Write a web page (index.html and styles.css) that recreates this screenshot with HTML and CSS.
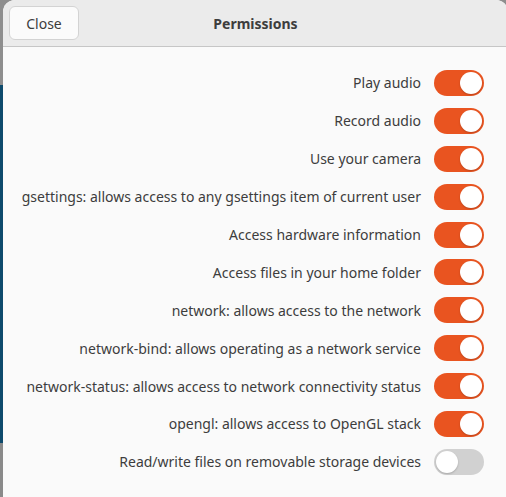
FILE: index.html
```html
<!DOCTYPE html>
<html>
<head>
<meta charset="utf-8">
<link rel="stylesheet" href="styles.css">
</head>
<body>
<div class="window">
  <header class="headerbar">
    <button class="close-btn">Close</button>
    <div class="title">Permissions</div>
  </header>
  <div class="content">
    <div class="row"><span class="label">Play audio</span><span class="switch on"><span class="knob"></span></span></div>
    <div class="row"><span class="label">Record audio</span><span class="switch on"><span class="knob"></span></span></div>
    <div class="row"><span class="label">Use your camera</span><span class="switch on"><span class="knob"></span></span></div>
    <div class="row"><span class="label">gsettings: allows access to any gsettings item of current user</span><span class="switch on"><span class="knob"></span></span></div>
    <div class="row"><span class="label">Access hardware information</span><span class="switch on"><span class="knob"></span></span></div>
    <div class="row"><span class="label">Access files in your home folder</span><span class="switch on"><span class="knob"></span></span></div>
    <div class="row"><span class="label">network: allows access to the network</span><span class="switch on"><span class="knob"></span></span></div>
    <div class="row"><span class="label">network-bind: allows operating as a network service</span><span class="switch on"><span class="knob"></span></span></div>
    <div class="row"><span class="label">network-status: allows access to network connectivity status</span><span class="switch on"><span class="knob"></span></span></div>
    <div class="row"><span class="label">opengl: allows access to OpenGL stack</span><span class="switch on"><span class="knob"></span></span></div>
    <div class="row"><span class="label">Read/write files on removable storage devices</span><span class="switch off"><span class="knob"></span></span></div>
  </div>
</div>
</body>
</html>
```
FILE: styles.css
```css
html, body {
  margin: 0;
  padding: 0;
  height: 100%;
  overflow: hidden;
}
body {
  background: linear-gradient(to bottom, #8e8e8e 0, #8e8e8e 85px, #0e4a6c 85px, #0e4a6c 443px, #8a8a8a 443px);
  font-family: "Noto Sans", "DejaVu Sans", sans-serif;
  color: #3d3d3d;
}
.window {
  margin-left: 3px;
  width: 505px;
  height: 497px;
  background: #fafafa;
  border-radius: 12px 12px 0 0;
  overflow: hidden;
}
.headerbar {
  height: 46px;
  background: #ebebeb;
  border-bottom: 1px solid #c6c6c6;
  display: flex;
  align-items: center;
  position: relative;
}
.close-btn {
  margin-left: 6px;
  width: 70px;
  height: 34px;
  background: #fbfbfb;
  border: 1px solid #d3d3d3;
  border-radius: 6px;
  font-family: inherit;
  font-size: 14px;
  color: #3d3d3d;
  padding: 0;
}
.title {
  position: absolute;
  left: 0;
  right: 0;
  top: 0;
  bottom: 0;
  display: flex;
  align-items: center;
  justify-content: center;
  font-weight: bold;
  font-size: 14px;
  pointer-events: none;
}
.content {
  padding-top: 17px;
  padding-right: 24px;
}
.row {
  height: 37.9px;
  display: flex;
  justify-content: flex-end;
  align-items: center;
  gap: 13px;
}
.label {
  font-size: 14px;
}
.switch {
  width: 50px;
  height: 26px;
  border-radius: 13px;
  box-sizing: border-box;
  display: flex;
  align-items: center;
  padding: 2px;
}
.switch.on {
  background: #e95420;
  justify-content: flex-end;
}
.switch.off {
  background: #d1d1d1;
  justify-content: flex-start;
}
.knob {
  width: 22px;
  height: 22px;
  border-radius: 50%;
  background: #ffffff;
  box-shadow: 0 1px 2px rgba(0,0,0,0.2);
}
```
